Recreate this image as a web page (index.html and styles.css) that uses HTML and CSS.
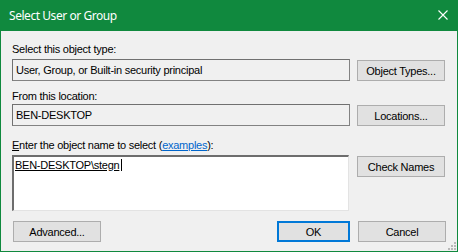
FILE: index.html
```html
<!DOCTYPE html>
<html>
<head>
    <meta charset="utf-8">
    <title>Select User or Group</title>
    <link rel="stylesheet" href="styles.css">
</head>
<body>
    <div class="window">
        <div class="titlebar">
            <span class="title">Select User or Group</span>
            <svg class="close" width="10" height="10" viewBox="0 0 10 10">
                <path d="M0.5 0.5 L9.5 9.5 M9.5 0.5 L0.5 9.5" stroke="#fff" stroke-width="1.1" fill="none"/>
            </svg>
        </div>
        <div class="client">
            <div class="label first">Select this object type:</div>
            <div class="row">
                <div class="box">User, Group, or Built-in security principal</div>
                <div class="btn">Object Types...</div>
            </div>

            <div class="label second">From this location:</div>
            <div class="row">
                <div class="box">BEN-DESKTOP</div>
                <div class="btn">Locations...</div>
            </div>

            <div class="label third"><u>E</u>nter the object name to select (<a class="link">examples</a>):</div>
            <div class="row">
                <div class="area"><span class="entered">BEN-DESKTOP\stegn</span><span class="caret"></span></div>
                <div class="btn">Check Names</div>
            </div>

            <div class="footer">
                <div class="btn wide">Advanced...</div>
                <div class="actions">
                    <div class="btn ok">OK</div>
                    <div class="btn">Cancel</div>
                </div>
            </div>

            <svg class="grip" width="9" height="9" viewBox="0 0 9 9">
                <rect x="7" y="1" width="2" height="2" fill="#b8b8b8"/>
                <rect x="4" y="4" width="2" height="2" fill="#b8b8b8"/>
                <rect x="7" y="4" width="2" height="2" fill="#b8b8b8"/>
                <rect x="1" y="7" width="2" height="2" fill="#b8b8b8"/>
                <rect x="4" y="7" width="2" height="2" fill="#b8b8b8"/>
                <rect x="7" y="7" width="2" height="2" fill="#b8b8b8"/>
            </svg>
        </div>
    </div>
</body>
</html>
```

FILE: styles.css
```css
html, body {
    margin: 0;
    padding: 0;
    width: 458px;
    height: 252px;
    overflow: hidden;
}

body {
    background: #10893e;
    font-family: "Liberation Sans", Arial, sans-serif;
    font-size: 11px;
    letter-spacing: -0.25px;
    color: #000;
}

.window {
    display: flex;
    flex-direction: column;
    height: 100%;
}

.titlebar {
    height: 31px;
    flex: none;
    display: flex;
    align-items: center;
    justify-content: space-between;
    padding: 0 10px 0 9px;
    color: #fff;
}

.title {
    font-family: "Noto Sans", "Open Sans", sans-serif;
    font-size: 12px;
    letter-spacing: -0.45px;
}

.close {
    margin-top: -1px;
}

.client {
    position: relative;
    flex: 1;
    background: #f0f0f0;
    margin: 0 1px 1px 1px;
    padding: 12px 11px 0 11px;
}

.label {
    height: 13px;
    line-height: 13px;
    margin-bottom: 3px;
}

.label.second {
    margin-top: 9px;
    margin-bottom: 1px;
}

.label.third {
    margin-top: 13px;
}

.link {
    color: #0066cc;
    text-decoration: underline;
}

.row {
    display: flex;
    align-items: flex-start;
    gap: 7px;
}

.box {
    width: 338px;
    height: 22px;
    box-sizing: border-box;
    border: 1px solid #828282;
    border-top-color: #707070;
    border-left-color: #707070;
    background: #f0f0f0;
    line-height: 20px;
    padding-left: 3px;
}

.area {
    width: 337px;
    height: 56px;
    box-sizing: border-box;
    background: #fff;
    border-style: solid;
    border-width: 2px 1px 1px 2px;
    border-color: #6d6d6d #e3e3e3 #e3e3e3 #6d6d6d;
    padding: 2px 0 0 1px;
    line-height: 13px;
}

.entered {
    text-decoration: underline;
}

.caret {
    display: inline-block;
    width: 1px;
    height: 12px;
    background: #000;
    margin-left: 2px;
    vertical-align: -2px;
}

.btn {
    width: 88px;
    height: 21px;
    box-sizing: border-box;
    margin-top: 1px;
    background: #e1e1e1;
    border: 1px solid #adadad;
    display: flex;
    align-items: center;
    justify-content: center;
    flex: none;
}

.row .area + .btn {
    margin-left: 1px;
}

.btn.wide {
    width: 88px;
    margin-left: 1px;
}

.btn.ok {
    width: 73px;
    border: 2px solid #0078d7;
}

.footer {
    display: flex;
    justify-content: space-between;
    margin-top: 9px;
}

.actions {
    display: flex;
    gap: 8px;
}

.grip {
    position: absolute;
    right: 1px;
    bottom: 1px;
}
```
